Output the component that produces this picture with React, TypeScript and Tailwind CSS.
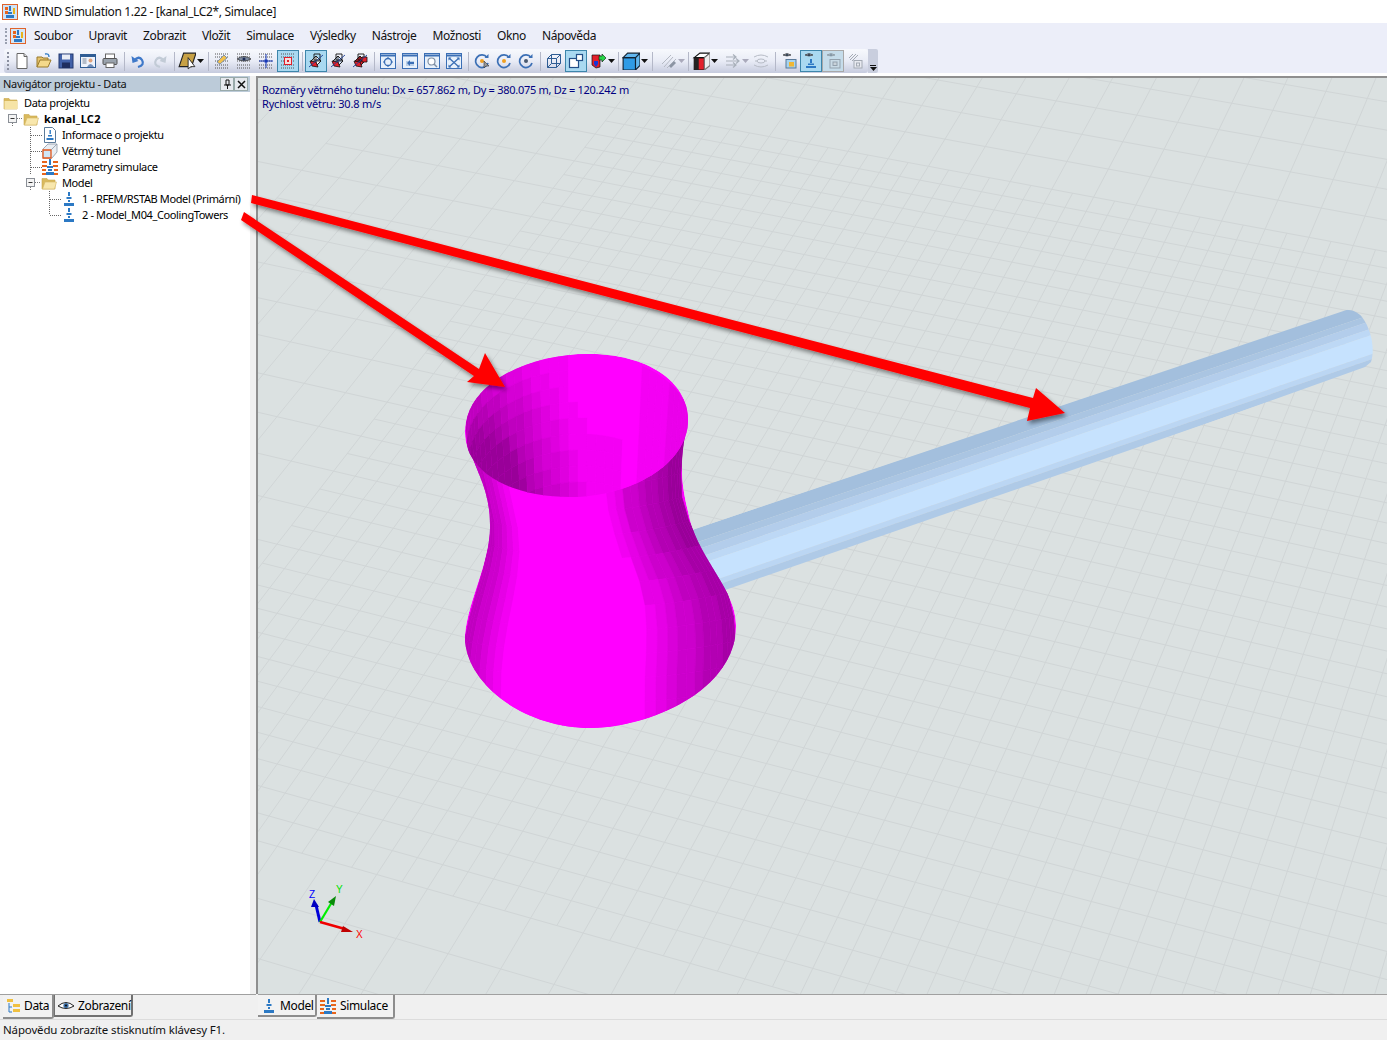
import React from "react";

const FONT = "font-['Noto_Sans','Open_Sans',sans-serif]";

/* ---------- small icons ---------- */
type P = { children: React.ReactNode; s?: number };
const I = ({ children, s = 16 }: P) => (
  <svg width={s} height={s} viewBox="0 0 16 16" className="shrink-0">
    {children}
  </svg>
);
const dots = (
  <path d="M1 1h14M1 4h14M1 8h14M1 12h14M1 15h14" stroke="#555" strokeDasharray="1 1" fill="none" />
);
const Folder = ({ open = false }: { open?: boolean }) => (
  <I>
    <path d="M1 3.500h5l1 1.500h7v9H1z" fill="#d9b95d" stroke="#c9a84e" strokeWidth=".6" />
    {open ? (
      <path d="M1.500 14 4 7h11.500l-2 7z" fill="#f8e7ad" stroke="#d4b765" strokeWidth=".6" />
    ) : (
      <path d="M1.500 6h13v8h-13z" fill="#f6e4a6" />
    )}
  </I>
);
const ModelIco = () => (
  <I>
    <path d="M7 1h2v4H7zM5.500 6h5v2h-5zM7 9h2v2H7zM3 12h10v3H3z" fill="#2c79c4" />
  </I>
);
const InfoIco = () => (
  <I>
    <path d="M2.500 .5h8l3 3v12h-11z" fill="#fff" stroke="#5b7a99" />
    <path d="M7.500 3h1.400v4h-1.400zM6 8h4v1.400H6zM4.500 11h7v2h-7z" fill="#2c79c4" />
  </I>
);
const TunnelIco = () => (
  <I>
    <path d="M6 1h9v8l-5 6H1V6z" fill="#e9edf2" stroke="#8a97a6" strokeWidth=".8" />
    <path d="M1 7h8v8H1z" fill="#cfe6f7" stroke="#e2561a" strokeWidth="1.300" />
    <path d="M9 7l6-6" stroke="#8a97a6" strokeWidth=".8" />
  </I>
);
const ParamIco = () => (
  <I>
    <path d="M0 2h5v2H0zM0 6h5v2H0zM0 10h4v2H0zM0 14h5v2H0zM11 2h5v2h-5zM11 6h5v2h-5zM12 10h4v2h-4zM11 14h5v2h-5z" fill="#e8651c" />
    <path d="M7 0h2v6H7zM5 7h6v2H5zM6 10h4v2H6zM4 13h8v3H4z" fill="#2c79c4" />
  </I>
);
const Blocks = ({ a, b, c }: { a: string; b: string; c?: string }) => (
  <I>
    <path d="M3 8 8 3l5 5-5 5z" fill={a} stroke="#111" strokeWidth=".9" />
    <path d="M8 3v10M3 8h10" stroke="#111" strokeWidth=".8" />
    <path d="M6 1h6v6H6z" fill="none" stroke="#111" strokeWidth=".9" />
    <path d="M2 8l2 5 6 1-2-5z" fill={b} stroke="#111" strokeWidth=".8" />
    {c && <path d="M10 4h5v5h-5z" fill={c} stroke="#111" strokeWidth=".8" />}
    <path d="M1 14 15 2" stroke="#1c3f99" strokeWidth=".9" />
  </I>
);
const Box = ({ children }: P) => (
  <I>
    <rect x=".5" y=".5" width="15" height="15" fill="#e8f1fb" stroke="#3b6fb5" />
    <path d="M.5 2.500h15" stroke="#3b6fb5" strokeWidth="2" />
    {children}
  </I>
);
const Spin = ({ c = "#3b6fb5", dot = "#f0a020", cursor = false }: { c?: string; dot?: string; cursor?: boolean }) => (
  <I>
    <path d="M13 4.500A6.300 6.300 0 1 0 14 10" fill="none" stroke={c} strokeWidth="1.700" />
    <path d="M10.500 5h4V1z" fill={c} />
    <circle cx="8" cy="8" r="2" fill={dot} />
    {cursor && <path d="M10 8v7l2-2 3 0z" fill="#999" stroke="#333" strokeWidth=".6" />}
  </I>
);
const Eye = ({ y = 2, dim = false }: { y?: number; dim?: boolean }) => (
  <g opacity={dim ? 0.45 : 1}>
    <path d={`M2 ${y + 1}q4-3 8 0q-4 2-8 0z`} fill="#9aa5b5" stroke="#333" strokeWidth=".7" />
    <circle cx="6" cy={y + 1} r="1" fill="#234" />
  </g>
);
const Caret = () => (
  <svg width="7" height="4" viewBox="0 0 7 4" className="ml-px shrink-0">
    <path d="M0 0h7L3.500 4z" fill="#111" />
  </svg>
);
const CaretGrey = () => (
  <svg width="7" height="4" viewBox="0 0 7 4" className="ml-px shrink-0">
    <path d="M0 0h7L3.500 4z" fill="#aab" />
  </svg>
);

const Sep = () => <div className="ml-[3px] mr-[2px] h-[19px] w-px shrink-0 bg-[#b4b8c8]" />;
const Btn = ({ children, on, grey, w }: { children: React.ReactNode; on?: boolean; grey?: boolean; w?: string }) => (
  <div
    className={`flex h-[22px] shrink-0 items-center justify-center ${w ?? "w-[22px]"} ${
      on ? "border border-[#3d86ab] bg-[#a9d9f1]" : grey ? "border border-[#a8a8a8] bg-[#c5dcea]" : ""
    }`}
  >
    {children}
  </div>
);

function Toolbar() {
  return (
    <div className="flex h-[24px] w-[864px] shrink-0 items-center rounded-[3px] bg-gradient-to-b from-[#f7f9fd] via-[#e9ecf6] to-[#c6cbde] pl-[3px]">
      <div className="mr-[1px] h-[18px] w-[3px] shrink-0 border-l-2 border-dotted border-[#8a8f9f]" />
      <Btn><I><path d="M3 .5h7l3 3v12H3z" fill="#fff" stroke="#666" /><path d="M10 .5v3h3" fill="#ddd" stroke="#666" /></I></Btn>
      <Btn><I><path d="M1 14V4h5l1 1h5v2" fill="#e5c36d" stroke="#9a7a2a" /><path d="M1 14l3-7h11l-3 7z" fill="#f4d98a" stroke="#9a7a2a" /><path d="M9 1q4-1 4 3" fill="none" stroke="#2c79c4" strokeWidth="1.300" /></I></Btn>
      <Btn><I><rect x="1" y="1" width="14" height="14" fill="#4262a9" stroke="#23386e" /><rect x="4" y="1.500" width="8" height="5" fill="#e8ecf5" /><rect x="4" y="9.500" width="8" height="5.500" fill="#1f2f60" /></I></Btn>
      <Btn><I><rect x=".5" y="1.500" width="15" height="13" fill="#eef3fb" stroke="#2f5d94" /><path d="M1 3h14" stroke="#2f5d94" strokeWidth="2" /><path d="M2.500 6h4M2.500 8h4M2.500 10h4" stroke="#7b8797" /><circle cx="10.500" cy="7.500" r="2" fill="#e0a27a" /><path d="M7 14q3.500-6 7 0z" fill="#6f8db8" /></I></Btn>
      <Btn><I><rect x="3.500" y="1" width="9" height="5" fill="#fff" stroke="#666" /><rect x="1" y="5.500" width="14" height="6" rx="1" fill="#9aa3ad" stroke="#555" /><rect x="4" y="10" width="8" height="4.500" fill="#fff" stroke="#666" /></I></Btn>
      <Sep />
      <Btn><I><path d="M4 8q5-6 8-1t-4 7" fill="none" stroke="#3f79c9" strokeWidth="2.300" /><path d="M1.500 3l1 7 6-2z" fill="#3f79c9" /></I></Btn>
      <Btn><I><path d="M12 8q-5-6-8-1t4 7" fill="none" stroke="#c2cbd6" strokeWidth="2.300" /><path d="M14.500 3l-1 7-6-2z" fill="#c2cbd6" /></I></Btn>
      <Sep />
      <Btn w="w-[28px]"><I s={18}><path d="M5 1h11l-4 12H1z" fill="#c7a145" stroke="#222" /><path d="M9 5v10l2.500-2 3.500 0z" fill="#fff" stroke="#222" strokeWidth=".8" /></I><Caret /></Btn>
      <Sep />
      <Btn><I>{dots}<path d="M3 9 10 2l3 3-7 6z" fill="#f2c14e" stroke="#5577aa" strokeWidth=".7" /></I></Btn>
      <Btn><I>{dots}<path d="M1 6q7-5 14 0q-7 4-14 0z" fill="#7c8aa0" stroke="#222" strokeWidth=".7" /><circle cx="8" cy="6" r="1.500" fill="#1b2a55" /></I></Btn>
      <Btn><I>{dots}<path d="M8 1v14M1 8h14" stroke="#1537b8" strokeWidth="1" /><rect x="6.500" y="6.500" width="3" height="3" fill="#1537b8" /></I></Btn>
      <Btn on><I>{dots}<rect x="4.500" y="4.500" width="7" height="7" fill="#f8dcdc" stroke="#e0202a" /><rect x="7" y="7" width="2" height="2" fill="#e0202a" /></I></Btn>
      <Sep />
      <Btn on><Blocks a="#fff" b="#e3202a" /></Btn>
      <Btn><Blocks a="#d8e8ff" b="#e3202a" /></Btn>
      <Btn><Blocks a="#e3202a" b="#e3202a" c="#e3202a" /></Btn>
      <Sep />
      <Btn><Box><circle cx="8" cy="9" r="3.500" fill="none" stroke="#3b6fb5" strokeWidth="1.300" /><path d="M8 4v2M8 12v2M3 9h2M11 9h2" stroke="#3b6fb5" /></Box></Btn>
      <Btn><Box><path d="M4 8h8v5H4z" fill="#b9cfe8" /><path d="M5 10l3-3v2h4v2H8v2z" fill="#3b6fb5" /></Box></Btn>
      <Btn><Box><circle cx="7.500" cy="8.500" r="3.500" fill="#fff" stroke="#7f8fa3" strokeWidth="1.200" /><path d="M10 11l3 3" stroke="#7f8fa3" strokeWidth="1.500" /></Box></Btn>
      <Btn><Box><path d="M3 5l10 9M13 5 3 14" stroke="#3b6fb5" strokeWidth="1.300" /><path d="M2.500 4.500h3l-3 3zM13.500 4.500h-3l3 3zM2.500 14.500h3l-3-3zM13.500 14.500h-3l3-3z" fill="#3b6fb5" /></Box></Btn>
      <Sep />
      <Btn><Spin cursor /></Btn>
      <Btn><Spin /></Btn>
      <Btn><Spin dot="#4a5a70" /></Btn>
      <Sep />
      <Btn><I><path d="M5.500 1.500h9v9h-9zM1.500 5.500h9v9h-9zM1.500 5.500l4-4M10.500 5.500l4-4M10.500 14.500l4-4M1.500 14.500l4-4" fill="none" stroke="#2f5d94" /></I></Btn>
      <Btn on><I><rect x="1.500" y="5.500" width="9" height="9" fill="#fff" stroke="#234f88" strokeWidth="1.200" /><rect x="8.500" y="1.500" width="6" height="6" fill="#fff" stroke="#234f88" strokeWidth="1.200" /></I></Btn>
      <Btn w="w-[28px] pl-[4px]"><I><path d="M1 2h8v12L5 15 1 12z" fill="#e3202a" stroke="#111" strokeWidth=".7" /><path d="M3 8h4v3l-2 3-2-3z" fill="#1537d8" /><path d="M8 3h3V1l4 4-4 4V7H8z" fill="#27d447" stroke="#111" strokeWidth=".6" /></I><Caret /></Btn>
      <Sep />
      <Btn w="w-[28px]"><I s={18}><path d="M1 5h11v11H1z" fill="#2f9be6" stroke="#123" /><path d="M1 5l4-4h11l-4 4zM12 5l4-4v11l-4 4z" fill="#62b7ef" stroke="#123" /></I><Caret /></Btn>
      <Sep />
      <Btn w="w-[30px] pl-[6px]"><I><g stroke="#b5bac4" fill="none"><path d="M1 11 10 2M3 14 12 4M6 15l9-9" /></g><path d="M8 13l5-5 2 2-5 5z" fill="#8c95a4" /></I><CaretGrey /></Btn>
      <Sep />
      <Btn w="w-[28px]"><I s={18}><path d="M2 5h9v11H2z" fill="#e3202a" stroke="#111" /><path d="M2 5l5-4h9l-5 4z" fill="#fff" stroke="#111" /><path d="M11 5l5-4v11l-5 4z" fill="#eee" stroke="#777" /><path d="M2 5h4v11H2z" fill="#222" /></I><Caret /></Btn>
      <Btn w="w-[31px] pl-[5px]"><I><g stroke="#a9b0ba" strokeWidth="1.200" fill="none"><path d="M1 4h10M1 8h13M1 12h10M8 1.500 11 4 8 6.500M11 5.500 14 8l-3 2.500M8 9.500l3 2.500-3 2.500" /></g></I><CaretGrey /></Btn>
      <Btn><I><g stroke="#b7bcc6" fill="none"><path d="M1 4q7-4 14 0M1 12q7 4 14 0M2 8h3M11 8h3" /><ellipse cx="8" cy="8" rx="4" ry="2" /></g></I></Btn>
      <Sep />
      <Btn><I><Eye y={1} /><rect x="5" y="6.500" width="10" height="8.500" fill="#a6d3ee" stroke="#5b7a99" /><rect x="8" y="9" width="5" height="4.500" fill="#f0b632" /></I></Btn>
      <Btn on><I><Eye y={1} /><path d="M7 6h2v4H7zM5 10.500h6v1.500H5zM3 13h10v2H3z" fill="#2c79c4" /></I></Btn>
      <Btn grey><I><Eye y={1} dim /><rect x="5" y="6.500" width="10" height="8.500" fill="#c9dbe6" stroke="#93a1ad" /><rect x="8" y="9" width="4" height="3.500" fill="#c9d3da" stroke="#93a1ad" /></I></Btn>
      <Btn><I><g stroke="#a4aab4" fill="none"><path d="M2 5 6 1M3 7l6-6M5 8l6-6" /><rect x="7" y="7.500" width="8" height="7.500" fill="#e8eaf0" /><rect x="9.500" y="10" width="3" height="3" /></g></I></Btn>
    </div>
  );
}

/* ---------- tree ---------- */
const Expander = () => (
  <svg width="20" height="16" viewBox="0 0 20 16" className="shrink-0">
    <path d="M9.500 12v4M14 7.500h5" stroke="#777" strokeDasharray="1 1" fill="none" />
    <rect x="5.500" y="3.500" width="8" height="8" fill="#f4f4f4" stroke="#8a8f96" />
    <path d="M7.500 7.500h4" stroke="#333" />
  </svg>
);
const Branch = ({ last, w = 12 }: { last?: boolean; w?: number }) => (
  <svg width={w} height="16" viewBox={`0 0 ${w} 16`} className="shrink-0">
    <path d={`M.5 0V${last ? 8 : 16}M1 8.500H${w}`} stroke="#666" strokeDasharray="1 1" fill="none" />
  </svg>
);
const Row = ({ children, pl }: { children: React.ReactNode; pl: string }) => (
  <div className={`flex h-4 items-center text-[11px] tracking-[-0.38px] text-[#000] ${pl}`}>{children}</div>
);

function Tree() {
  return (
    <div className="flex flex-col pt-[3px]">
      <Row pl="pl-[3px]"><Folder /><span className="ml-[5px]">Data projektu</span></Row>
      <Row pl="pl-[3px]"><Expander /><Folder open /><span className="ml-[5px] font-bold tracking-[0.28px]">kanal_LC2</span></Row>
      <Row pl="pl-[30px]"><Branch /><InfoIco /><span className="ml-[4px]">Informace o projektu</span></Row>
      <Row pl="pl-[30px]"><Branch /><TunnelIco /><span className="ml-[4px]">Větrný tunel</span></Row>
      <Row pl="pl-[30px]"><Branch /><ParamIco /><span className="ml-[4px]">Parametry simulace</span></Row>
      <Row pl="pl-[21px]"><Expander /><Folder open /><span className="ml-[5px]">Model</span></Row>
      <Row pl="pl-[49px]"><Branch /><ModelIco /><span className="ml-[5px]">1 - RFEM/RSTAB Model (Primární)</span></Row>
      <Row pl="pl-[49px]"><Branch last /><ModelIco /><span className="ml-[5px]">2 - Model_M04_CoolingTowers</span></Row>
    </div>
  );
}

/* ---------- 3D scene ---------- */
const VPU = [-8000, -1500];
const VPV = [2250, -2000];
const O = [1200, 217];
const G = -0.00234;
const H = -0.00654;
const proj = (u: number, v: number) => {
  const U = G * u;
  const V = H * v;
  const w = 1 + U + V;
  return [(VPU[0] * U + VPV[0] * V + O[0]) / w, (VPU[1] * U + VPV[1] * V + O[1]) / w];
};
const mod = (a: number, n: number) => ((a % n) + n) % n;
const seg = (a: number[], b: number[]) => `M${a[0].toFixed(1)} ${a[1].toFixed(1)}L${b[0].toFixed(1)} ${b[1].toFixed(1)}`;

function gridPath() {
  let d = "";
  const UMIN = -70, UMAX = 40, VMIN = -24, VMAX = 60;
  for (let u = UMIN; u <= UMAX; u++) {
    if (mod(u + 1, 4) === 0) d += seg(proj(u, VMIN), proj(u, VMAX));
    else if (mod(u, 2) === 1) {
      if (u >= -41) d += seg(proj(u, VMIN), proj(u, VMAX));
    } else if (u >= -29) d += seg(proj(u, 0), proj(u, 40));
  }
  for (let v = VMIN; v <= VMAX; v++) {
    if (mod(v, 4) === 0) d += seg(proj(UMIN, v), proj(UMAX, v));
    else if (mod(v, 2) === 0) d += seg(proj(-41, v), proj(UMAX, v));
    else if (v > 0 && v < 40) d += seg(proj(-29, v), proj(UMAX, v));
  }
  return d;
}

const PROFILE = [
  [425, 576, 112], [450, 577, 106], [470, 579, 102], [490, 581, 99], [510, 586, 99], [530, 591, 101],
  [550, 596, 108], [570, 600, 117], [590, 602, 125], [610, 602, 131], [640, 600, 135.5], [670, 598, 137], [760, 598, 137],
];
const prof = (y: number) => {
  for (let i = 1; i < PROFILE.length; i++) {
    if (y <= PROFILE[i][0]) {
      const [y0, c0, r0] = PROFILE[i - 1];
      const [y1, c1, r1] = PROFILE[i];
      const t = (y - y0) / (y1 - y0);
      return [c0 + (c1 - c0) * t, r0 + (r1 - r0) * t];
    }
  }
  return [598, 137];
};
const mag = (b: number) => {
  const v = Math.round(255 * Math.max(0.6, Math.min(1, b)));
  return `rgb(${v},0,${v})`;
};

function bodyFacets() {
  const out: { d: string; f: string }[] = [];
  const N = 18;
  const step = 24;
  for (let y = 425; y < 760; y += step) {
    const ym = y + step / 2;
    const upper = Math.max(0, Math.min(1, (600 - ym) / 80));
    for (let i = -N; i < N; i++) {
      const a = (i / N) * (Math.PI / 2);
      const b = ((i + 1) / N) * (Math.PI / 2);
      const s0 = Math.sin(a);
      const s1 = Math.sin(b);
      const sm = (s0 + s1) / 2;
      const [c0, r0] = prof(y);
      const [c1, r1] = prof(y + step);
      const bow = (s: number) => 14 * (1 - s * s);
      const pts = [
        [c0 + s0 * r0, y + bow(s0)],
        [c0 + s1 * r0, y + bow(s1)],
        [c1 + s1 * r1, y + step + bow(s1)],
        [c1 + s0 * r1, y + step + bow(s0)],
      ];
      let br = 1;
      if (sm > 0.3) br -= 0.33 * Math.min(1, Math.pow((sm - 0.3) / 0.6, 0.85));
      if (sm < -0.65) br -= 0.25 * Math.min(1, (-sm - 0.65) / 0.33);
      if (sm > 0.1) br -= upper * 0.07 * Math.min(1, (sm - 0.1) * 3);
      const q = Math.round(br * 20) / 20;
      out.push({ d: "M" + pts.map((p) => p.map((n) => n.toFixed(1)).join(" ")).join("L") + "Z", f: mag(q) });
    }
  }
  return out;
}

function innerFacets() {
  const out: { d: string; f: string }[] = [];
  const N = 18;
  const rings = 10;
  for (let j = 0; j < rings; j++) {
    for (let i = -N; i < N; i++) {
      const a = (i / N) * (Math.PI / 2);
      const b = ((i + 1) / N) * (Math.PI / 2);
      const s0 = Math.sin(a), s1 = Math.sin(b);
      const k0 = Math.cos(a), k1 = Math.cos(b);
      const shrink = (d: number) => 1 - 0.12 * d;
      const d0 = j / rings, d1 = (j + 1) / rings;
      const x = (s: number, d: number) => 578 + s * 112 * shrink(d);
      const yy = (k: number, s: number, d: number) => 426 - 2 * s - k * 72 + d * 160;
      const pts = [
        [x(s0, d0), yy(k0, s0, d0)],
        [x(s1, d0), yy(k1, s1, d0)],
        [x(s1, d1), yy(k1, s1, d1)],
        [x(s0, d1), yy(k0, s0, d1)],
      ];
      const sm = (s0 + s1) / 2;
      const dm = (d0 + d1) / 2;
      const f = Math.max(0, -sm + 0.1);
      let br = 1 - (0.2 + 0.72 * dm) * Math.pow(f, 1.5);
      if (sm > -0.3 && sm < 0.4) br -= 0.1 * Math.max(0, dm - 0.25);
      if (sm > 0.8) br -= 0.1;
      else if (sm > 0.55) br -= 0.04;
      const q = Math.round(br * 24) / 24;
      out.push({ d: "M" + pts.map((p) => p.map((n) => n.toFixed(1)).join(" ")).join("L") + "Z", f: mag(q) });
    }
  }
  return out;
}

const PIPE_T = [
  [0, 0.2, "#a3bfdd"],
  [0.2, 0.3, "#aac5e2"],
  [0.3, 0.42, "#b3cdeb"],
  [0.42, 0.52, "#bdd8f5"],
  [0.52, 0.82, "#c6e2fe"],
  [0.82, 0.9, "#bbd6f3"],
  [0.9, 1.01, "#afcae7"],
] as const;
const lerp = (a: number[], b: number[], t: number) => [a[0] + (b[0] - a[0]) * t, a[1] + (b[1] - a[1]) * t];

function Scene() {
  const LT = [680, 534], RT = [1400, 292];
  const LB = [700, 598], RB = [1420, 349];
  const BODY = "M468,447 C476,470 490,490 490,525 C491,560 468,600 465,635 C463,680 520,728 590,728 C650,728 737,690 736,625 C736,590 700,560 690,520 C683,490 677,470 688,420 L465,430Z";
  const RIM = "M465,432 C465,385 525,354 590,354 C645,354 688,380 688,420 C688,465 630,497 570,497 C515,497 465,475 465,432Z";
  return (
    <svg viewBox="258 78 1129 916" className="absolute inset-0 h-full w-full">
      <defs>
        <clipPath id="pipe">
          <path d="M692,530 L1340,311 C1348,308 1357,311 1362,317 C1372,330 1375,350 1371,362 L1365,367 L735,592 L692,592Z" />
        </clipPath>
        <clipPath id="body"><path d={BODY} /></clipPath>
        <clipPath id="rim"><path d={RIM} /></clipPath>
      </defs>
      <path d={gridPath()} stroke="#d0d5d6" strokeWidth="1" fill="none" />
      <g clipPath="url(#pipe)">
        {PIPE_T.map(([a, b, c]) => {
          const p = [lerp(LT, LB, a), lerp(RT, RB, a), lerp(RT, RB, b), lerp(LT, LB, b)];
          return <path key={c} d={"M" + p.map((q) => q.join(" ")).join("L") + "Z"} fill={c} />;
        })}
      </g>
      <g clipPath="url(#body)">
        <path d={BODY} fill="#ff00ff" />
        {bodyFacets().map((f, i) => (
          <path key={i} d={f.d} fill={f.f} stroke={f.f} strokeWidth=".4" />
        ))}
      </g>
      <g clipPath="url(#rim)">
        <path d={RIM} fill="#ff00ff" />
        {innerFacets().map((f, i) => (
          <path key={i} d={f.d} fill={f.f} stroke={f.f} strokeWidth=".4" />
        ))}
      </g>
      <g fontFamily="'Liberation Sans',sans-serif" fontSize="10">
        <path d="M320 922 316 905" stroke="#0000d8" strokeWidth="3" />
        <path d="M314 899l-3 8h8z" fill="#0000c0" />
        <path d="M320 922 332 902" stroke="#00ee00" strokeWidth="2.200" />
        <path d="M336 896l-8 6 6 4z" fill="#0a8a0a" />
        <path d="M320 922 345 929" stroke="#f00000" strokeWidth="2.500" />
        <path d="M353 932l-10-6-2 6z" fill="#c00000" />
        <text x="309" y="898" fill="#0000ff">Z</text>
        <text x="336" y="893" fill="#00e000">Y</text>
        <text x="356" y="938" fill="#ff0000">X</text>
      </g>
    </svg>
  );
}

const Tab = ({ children, active, className }: { children: React.ReactNode; active?: boolean; className: string }) => (
  <div
    className={`flex items-center rounded-br-[3px] text-[12px] tracking-[-0.36px] text-[#000] ${
      active ? "border-r-2 border-b-2 border-[#8d8d8d] bg-[#f2f2f2]" : "border-r-2 border-b-2 border-l border-[#707070] bg-[#efefef]"
    } ${className}`}
  >
    {children}
  </div>
);

export default function App() {
  return (
    <div className={`relative flex h-[1040px] w-[1387px] flex-col overflow-hidden bg-white ${FONT}`}>
      {/* title bar */}
      <div className="flex h-[23px] shrink-0 items-center pl-[2px] text-[12px] tracking-[-0.34px] text-[#111]">
        <svg width="16" height="16" viewBox="0 0 16 16" className="shrink-0">
          <rect x=".5" y=".5" width="15" height="15" fill="#cfe3f6" stroke="#e0632a" />
          <path d="M3 3h3v3H3zM3 7h3v3H3z" fill="#e8651c" />
          <path d="M7 2h2v5H7zM6 8h4v2H6zM4 11h8v3H4z" fill="#2c79c4" />
          <path d="M11 4h2v6h-2z" fill="#e8b21c" />
        </svg>
        <span className="ml-[5px]">RWIND Simulation 1.22 - [kanal_LC2*, Simulace]</span>
      </div>

      {/* menu + toolbar */}
      <div className="flex h-[50px] shrink-0 flex-col bg-[#eceef9]">
        <div className="flex h-[26px] shrink-0 items-center pl-[5px] text-[12px] tracking-[-0.38px] text-[#111]">
          <div className="mr-[8px] flex items-center">
            <div className="mr-[3px] h-[16px] w-[2px] border-l-2 border-dotted border-[#9aa0b0]" />
            <svg width="16" height="16" viewBox="0 0 16 16" className="shrink-0">
              <rect x=".5" y=".5" width="15" height="15" fill="#d5e6f6" stroke="#e0632a" />
              <path d="M3 3h3v3H3zM3 7h3v3H3z" fill="#e8651c" />
              <path d="M7 2h2v5H7zM6 8h4v2H6zM4 11h8v3H4z" fill="#2c79c4" />
              <path d="M11 4h2v6h-2z" fill="#e8b21c" />
            </svg>
          </div>
          <div className="flex gap-[16px]">
            {["Soubor", "Upravit", "Zobrazit", "Vložit", "Simulace", "Výsledky", "Nástroje", "Možnosti", "Okno", "Nápověda"].map((m) => (
              <span key={m}>{m}</span>
            ))}
          </div>
        </div>
        <div className="flex items-start pl-[4px]">
          <Toolbar />
          <div className="flex h-[24px] w-[10px] shrink-0 flex-col items-center justify-end rounded-r-[2px] bg-[#c9cede] pb-[2px]">
            <div className="mb-px h-px w-[6px] bg-[#111]" />
            <Caret />
          </div>
        </div>
      </div>
      <div className="h-[3px] shrink-0 bg-white" />

      {/* main */}
      <div className="flex min-h-0 flex-1">
        <div className="flex w-[250px] shrink-0 flex-col bg-white">
          <div className="flex h-[16px] shrink-0 items-center justify-between bg-[#bccbd9] pl-[3px] pr-[2px] text-[11px] tracking-[-0.3px] text-[#111]">
            <span>Navigátor projektu - Data</span>
            <div className="flex">
              <div className="flex h-[14px] w-[14px] items-center justify-center border border-[#9aa] bg-[#e6e9ee]">
                <svg width="9" height="10" viewBox="0 0 9 10"><path d="M3 1h3v5H3zM1 6h7M4.500 6v4" fill="none" stroke="#111" /></svg>
              </div>
              <div className="flex h-[14px] w-[14px] items-center justify-center border border-[#9aa] bg-[#e6e9ee]">
                <svg width="9" height="9" viewBox="0 0 9 9"><path d="M1 1l7 7M8 1 1 8" stroke="#111" strokeWidth="1.500" /></svg>
              </div>
            </div>
          </div>
          <Tree />
        </div>
        <div className="w-[6px] shrink-0 bg-[#f0f0f0]" />
        <div className="flex min-w-0 flex-1 flex-col border-t-2 border-l-2 border-[#8f8f8f]">
          <div className="relative flex-1 bg-[#dbe1e1]">
            <Scene />
            <div className="relative pl-[4px] pt-[5px] text-[11px] leading-[14px] text-[#000080]">
              <div className="tracking-[-0.28px]">Rozměry větrného tunelu: Dx = 657.862 m, Dy = 380.075 m, Dz = 120.242 m</div>
              <div className="tracking-[-0.18px]">Rychlost větru: 30.8 m/s</div>
            </div>
          </div>
        </div>
      </div>

      {/* tab strip */}
      <div className="flex h-[25px] shrink-0 bg-[#f0f0f0]">
        <div className="flex w-[256px] shrink-0 flex-col">
          <div className="h-[1px] bg-[#a0a0a0]" />
          <div className="flex pl-[3px]">
            <Tab active className="h-[24px] w-[51px] gap-[2px] pl-[3px]"><I><path d="M1 1h6v3H1z" fill="#f0c040" /><path d="M3 5v9h3M3 9h3" stroke="#2c79c4" fill="none" /><path d="M7 6h7v3H7zM7 11h7v3H7z" fill="#f0c040" /></I><span>Data</span></Tab>
            <Tab className="h-[22px] w-[79px] gap-[4px] pl-[3px] pt-[1px]"><I><path d="M0 8q8-7 16 0q-8 5-16 0z" fill="#fff" stroke="#222" /><circle cx="8" cy="7.500" r="2.600" fill="#3a6ea5" /><circle cx="8" cy="7.500" r="1.100" fill="#111" /></I><span>Zobrazení</span></Tab>
          </div>
        </div>
        <div className="flex min-w-0 flex-1 flex-col">
          <div className="ml-[2px] h-[1px] bg-[#a0a0a0]" />
          <div className="flex pl-[2px]">
            <Tab active className="h-[22px] w-[59px] gap-[3px] pl-[3px] pt-[1px]"><ModelIco /><span>Model</span></Tab>
            <Tab active className="h-[24px] w-[78px] gap-[4px] pl-[3px]"><ParamIco /><span>Simulace</span></Tab>
          </div>
        </div>
      </div>

      {/* status */}
      <div className="flex h-[21px] shrink-0 items-center border-t border-[#dcdcdc] bg-[#f0f0f0] pl-[3px] text-[11.5px] tracking-[-0.15px] text-[#111]">
        Nápovědu zobrazíte stisknutím klávesy F1.
      </div>

      {/* red annotation arrows over the whole window */}
      <svg viewBox="0 0 1387 1040" className="pointer-events-none absolute inset-0 h-full w-full">
        <defs>
          <filter id="ds" x="-10%" y="-10%" width="120%" height="120%">
            <feDropShadow dx="2" dy="3" stdDeviation="2" floodColor="#000" floodOpacity=".45" />
          </filter>
        </defs>
        <g filter="url(#ds)" fill="#ff0000">
          <path d="M252 195 1033 398 1036 388 1065 413 1027 421 1030 408 251 203Z" />
          <path d="M244 212 479 369 485 353 505 387 467 382 474 376 241 220Z" />
        </g>
      </svg>
    </div>
  );
}
